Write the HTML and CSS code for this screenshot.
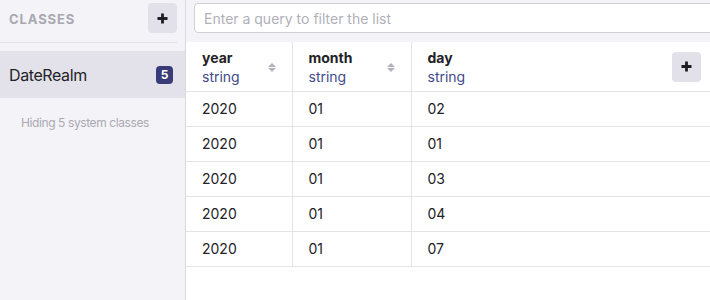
FILE: index.html
```html
<!DOCTYPE html>
<html>
<head>
<meta charset="utf-8">
<link rel="stylesheet" href="styles.css">
</head>
<body>
<div class="app">
  <aside class="sidebar">
    <div class="sidebar-header">
      <span class="sidebar-title">CLASSES</span>
      <button class="icon-btn" aria-label="Add class">
        <svg width="11" height="11" viewBox="0 0 11 11"><path d="M5.5 0.5v10M0.5 5.5h10" stroke="#1d1d22" stroke-width="2.8" fill="none"/></svg>
      </button>
    </div>
    <div class="class-item">
      <span class="class-name">DateRealm</span>
      <span class="badge">5</span>
    </div>
    <div class="hint">Hiding 5 system classes</div>
  </aside>
  <main class="main">
    <div class="topbar">
      <input class="query" type="text" placeholder="Enter a query to filter the list">
    </div>
    <table class="grid">
      <thead>
        <tr>
          <th class="col-year">
            <div class="th-inner">
              <div><div class="th-name">year</div><div class="th-type">string</div></div>
              <span class="sort"><span class="up"></span><span class="down"></span></span>
            </div>
          </th>
          <th class="col-month">
            <div class="th-inner">
              <div><div class="th-name">month</div><div class="th-type">string</div></div>
              <span class="sort"><span class="up"></span><span class="down"></span></span>
            </div>
          </th>
          <th class="col-day">
            <div class="th-inner">
              <div><div class="th-name">day</div><div class="th-type">string</div></div>
              <button class="icon-btn" aria-label="Add property">
                <svg width="11" height="11" viewBox="0 0 11 11"><path d="M5.5 0.5v10M0.5 5.5h10" stroke="#1d1d22" stroke-width="2.8" fill="none"/></svg>
              </button>
            </div>
          </th>
        </tr>
      </thead>
      <tbody>
        <tr><td>2020</td><td>01</td><td>02</td></tr>
        <tr><td>2020</td><td>01</td><td>01</td></tr>
        <tr><td>2020</td><td>01</td><td>03</td></tr>
        <tr><td>2020</td><td>01</td><td>04</td></tr>
        <tr><td>2020</td><td>01</td><td>07</td></tr>
      </tbody>
    </table>
  </main>
</div>
</body>
</html>
```
FILE: styles.css
```css
* { box-sizing: border-box; }
html, body { margin: 0; padding: 0; }
body {
  font-family: Inter, "Noto Sans", sans-serif;
  color: #222226;
  background: #ffffff;
  overflow: hidden;
}
.app {
  display: flex;
  height: 300px;
  width: 710px;
}
.sidebar {
  width: 186px;
  flex: none;
  background: #f4f3f8;
  border-right: 1px solid #d9d8de;
}
.sidebar-header {
  height: 43px;
  margin-right: 8px;
  padding: 3px 0 0 9px;
  border-bottom: 1px solid #e3e2e8;
  display: flex;
  justify-content: space-between;
  align-items: flex-start;
}
.sidebar-title {
  margin-top: 8px;
  font-size: 13px;
  font-weight: 700;
  letter-spacing: 0.9px;
  color: #a9a8b0;
}
.icon-btn {
  width: 29px;
  height: 30px;
  border: none;
  border-radius: 4px;
  background: #e2e1e9;
  padding: 0;
  display: flex;
  align-items: center;
  justify-content: center;
  cursor: pointer;
}
.class-item {
  margin-top: 8px;
  height: 47px;
  background: #e3e2ea;
  display: flex;
  align-items: center;
  justify-content: space-between;
  padding: 0 12px 0 9px;
}
.class-name {
  font-size: 16px;
  letter-spacing: -0.4px;
  color: #222226;
}
.badge {
  width: 17px;
  height: 18px;
  border-radius: 4px;
  background: #393b78;
  color: #ffffff;
  font-size: 12px;
  font-weight: 700;
  display: flex;
  align-items: center;
  justify-content: center;
}
.hint {
  padding: 17px 0 0 21px;
  font-size: 12px;
  letter-spacing: -0.4px;
  color: #aaa9b1;
}
.main {
  flex: 1;
  min-width: 0;
  display: flex;
  flex-direction: column;
}
.topbar {
  height: 42px;
  flex: none;
  background: #f4f3f8;
  padding: 3px 0 0 8px;
  display: flex;
}
.query {
  flex: none;
  width: 540px;
  height: 30px;
  border: 1px solid #d0cfd6;
  border-radius: 4px;
  background: #ffffff;
  padding: 0 9px;
  font-family: Inter, "Noto Sans", sans-serif;
  font-size: 14px;
  color: #222226;
  outline: none;
}
.query::placeholder { color: #b1b0b8; }
.grid {
  border-collapse: collapse;
  width: 100%;
  table-layout: fixed;
}
.col-year { width: 106px; }
.col-month { width: 119px; }
.grid th, .grid td {
  border-bottom: 1px solid #e4e3e8;
  border-right: 1px solid #e4e3e8;
  text-align: left;
  padding: 0 16px;
}
.grid th:last-child, .grid td:last-child { border-right: none; }
.grid th {
  height: 49px;
  padding-right: 9px;
  padding-top: 1px;
}
.grid th.col-year, .grid th.col-month { padding-right: 16px; }
.th-inner {
  display: flex;
  align-items: center;
  justify-content: space-between;
}
.th-name {
  font-size: 14px;
  font-weight: 700;
  line-height: 19px;
  color: #222226;
}
.th-type {
  font-size: 14px;
  font-weight: 400;
  line-height: 19px;
  color: #3f4a8a;
}
.sort {
  display: flex;
  flex-direction: column;
  gap: 1px;
  margin-top: 2px;
}
.sort .up, .sort .down {
  width: 0;
  height: 0;
  border-left: 4px solid transparent;
  border-right: 4px solid transparent;
}
.sort .up { border-bottom: 4px solid #b4b3bb; }
.sort .down { border-top: 4px solid #b4b3bb; }
.grid td {
  height: 35px;
  font-size: 14px;
  color: #222226;
}
```
